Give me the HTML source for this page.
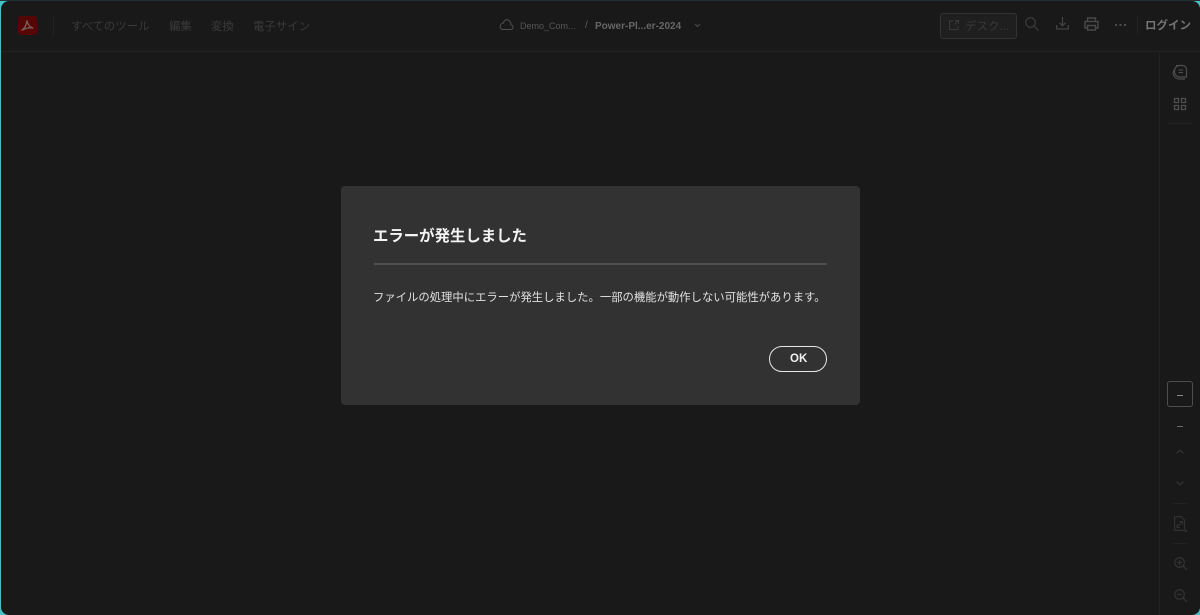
<!DOCTYPE html>
<html lang="ja">
<head>
<meta charset="utf-8">
<style>
html,body{margin:0;padding:0;width:1200px;height:615px;overflow:hidden;background:#45c0c4;}
body{font-family:"Liberation Sans","Noto Sans CJK JP",sans-serif;position:relative;}
#top{position:absolute;left:0;top:0;width:1200px;height:1px;background:#1e3133;}
#app{position:absolute;left:1px;top:1px;width:1199px;height:614px;background:#191919;border-radius:8px;overflow:hidden;}
.t{position:absolute;white-space:nowrap;line-height:1;}
svg{position:absolute;overflow:visible;fill:none;}
.l{position:absolute;background:#222222;}
#dlg{position:absolute;left:341px;top:186px;width:519px;height:219px;background:#323232;border-radius:4px;}
</style>
</head>
<body>
<div id="app"></div>
<div class="l" style="left:1px;top:51px;width:1199px;height:1px"></div>
<div class="l" style="left:1159px;top:52px;width:1px;height:563px"></div>
<div class="l" style="left:53px;top:15px;width:1px;height:21px"></div>
<div class="l" style="left:1137px;top:16px;width:1px;height:19px"></div>

<div style="position:absolute;left:18px;top:16px;width:19px;height:19px;border-radius:3px;background:#560605"></div>
<svg style="left:18px;top:16px" width="19" height="19" viewBox="0 0 19 19"><path d="M3.500 14.500C6.500 12.500 8.500 8.500 9 4.500C9.500 8.500 12 11.500 15.500 12C12 11.500 7.500 12 3.500 14.500Z" stroke="#7a5c5a" stroke-width="1.300"/></svg>

<div class="t" style="left:71px;top:22px;font-size:11.400px;color:#3a3a3a">すべてのツール</div>
<div class="t" style="left:169px;top:22px;font-size:11.400px;color:#3a3a3a">編集</div>
<div class="t" style="left:211px;top:22px;font-size:11.400px;color:#3a3a3a">変換</div>
<div class="t" style="left:253px;top:22px;font-size:11.400px;color:#3a3a3a">電子サイン</div>

<svg style="left:499px;top:18px" width="15" height="13" viewBox="0 0 15 13"><path d="M3.500 11.500H11.500C14.500 11.500 15 7.500 12 6.800C12 3.500 9 0.500 6.500 2.200C5 3 4.500 4.500 4.500 5C1 5 -0.500 11 3.500 11.500Z" stroke="#505050" stroke-width="1"/></svg>
<div class="t" style="left:520px;top:22px;font-size:9px;color:#565656">Demo_Com...</div>
<div class="t" style="left:585px;top:21px;font-size:10px;color:#5e5e5e">/</div>
<div class="t" style="left:595px;top:22px;font-size:10px;font-weight:bold;color:#666666">Power-Pl...er-2024</div>
<svg style="left:694px;top:23px" width="7" height="5" viewBox="0 0 7 5"><path d="M1 1L3.500 3.500L6 1" stroke="#4c4c4c" stroke-width="1"/></svg>

<div style="position:absolute;left:940px;top:13px;width:75px;height:24px;border:1px solid #333333;border-radius:3px;background:#1f1f1f"></div>
<svg style="left:949px;top:20px" width="10" height="10" viewBox="0 0 10 10"><path d="M4.500 1H.5V9.500H9V6M6 .5H9.500V4M9.500 .5L5.500 4.500" stroke="#383838" stroke-width="1"/></svg>
<div class="t" style="left:965px;top:22px;font-size:11.500px;color:#3a3a3a">デスク...</div>

<svg style="left:1025px;top:17px" width="14" height="14" viewBox="0 0 14 14"><circle cx="5.500" cy="5.500" r="4.800" stroke="#383838" stroke-width="1.300"/><path d="M9 9L13.500 13.500" stroke="#383838" stroke-width="1.300"/></svg>
<svg style="left:1056px;top:17px" width="13" height="13" viewBox="0 0 13 13"><path d="M6.500 0V8.500M3.500 5.800L6.500 8.800L9.500 5.800M.7 8V12H12.300V8" stroke="#424242" stroke-width="1.300"/></svg>
<svg style="left:1084px;top:17px" width="15" height="14" viewBox="0 0 15 14"><path d="M3.500 4V1H11.500V4M3.500 11H1V4.500H14V11H11.500M3.500 8.500H11.500V13H3.500Z" stroke="#484848" stroke-width="1.400"/></svg>
<div style="position:absolute;left:1115px;top:24px;width:2px;height:2px;background:#4c4c4c;box-shadow:4.500px 0 #4c4c4c,9px 0 #4c4c4c"></div>
<div class="t" style="left:1145px;top:21px;font-size:11.500px;font-weight:bold;color:#747474">ログイン</div>

<svg style="left:1172px;top:64px" width="16" height="16" viewBox="0 0 16 16"><path d="M4 1.500H10C13 1.500 14.500 3.500 14.500 6V13H8C4 13 2.500 10 2.500 7.500C2.500 4 4 2 7 1.500M2.500 5.500C0 8 1 15 8 15H13" stroke="#4e4e4e" stroke-width="1.200"/><path d="M6.500 6H11M6.500 8.500H11" stroke="#4e4e4e"/></svg>
<svg style="left:1174px;top:98px" width="12" height="12" viewBox="0 0 12 12"><path d="M.5 .5H4.500V4.500H.5ZM7.500 .5H11.500V4.500H7.500ZM.5 7.500H4.500V11.500H.5ZM7.500 7.500H11.500V11.500H7.500Z" stroke="#4e4e4e" stroke-width="1.300"/></svg>
<div class="l" style="left:1167px;top:123px;width:26px;height:1px"></div>

<div style="position:absolute;left:1167px;top:381px;width:24px;height:24px;border:1px solid #4e4e4e;border-radius:3px"></div>
<div style="position:absolute;left:1177px;top:395px;width:6px;height:1px;background:#8a8a8a"></div>
<div style="position:absolute;left:1177px;top:426px;width:6px;height:1px;background:#6c6c6c"></div>
<svg style="left:1176px;top:449px" width="8" height="5" viewBox="0 0 8 5"><path d="M.5 4.500L4 1L7.500 4.500" stroke="#303030" stroke-width="1.300"/></svg>
<svg style="left:1176px;top:481px" width="8" height="5" viewBox="0 0 8 5"><path d="M.5 .5L4 4L7.500 .5" stroke="#303030" stroke-width="1.300"/></svg>
<div class="l" style="left:1173px;top:503px;width:14px;height:1px"></div>
<svg style="left:1174px;top:516px" width="14" height="17" viewBox="0 0 14 17"><path d="M.6 1.500Q.6 .6 1.500 .6H7L10.500 4V13.500Q10.500 14.400 9.500 14.400H1.500Q.6 14.400 .6 13.500Z" stroke="#313131" stroke-width="1.200"/><path d="M3 11L8 6M5.500 5.500H8.500V8.500M3 8.500V11.500H6" stroke="#313131"/><path d="M13 13V16H10Z" fill="#313131"/></svg>
<div class="l" style="left:1173px;top:543px;width:14px;height:1px"></div>
<svg style="left:1174px;top:557px" width="13" height="13" viewBox="0 0 13 13"><circle cx="5.500" cy="5.500" r="4.800" stroke="#313131" stroke-width="1.300"/><path d="M9 9L13 13M3 5.500H8M5.500 3V8" stroke="#313131" stroke-width="1.300"/></svg>
<svg style="left:1174px;top:589px" width="13" height="13" viewBox="0 0 13 13"><circle cx="5.500" cy="5.500" r="4.800" stroke="#313131" stroke-width="1.300"/><path d="M9 9L13 13M3 5.500H8" stroke="#313131" stroke-width="1.300"/></svg>

<div id="dlg"></div>
<div class="t" style="left:373px;top:229px;font-size:15.400px;font-weight:bold;color:#f4f4f4">エラーが発生しました</div>
<div style="position:absolute;left:374px;top:263px;width:453px;height:2px;background:#4f4f4f"></div>
<div class="t" style="left:373px;top:293px;font-size:11.350px;color:#e0e0e0">ファイルの処理中にエラーが発生しました。一部の機能が動作しない可能性があります。</div>
<div style="position:absolute;left:769px;top:346px;width:56px;height:24px;border:1px solid #e6e6e6;border-radius:13px"></div>
<div class="t" style="left:790px;top:354px;font-size:11.500px;font-weight:bold;color:#f0f0f0">OK</div>
<div id="top"></div>
</body>
</html>
